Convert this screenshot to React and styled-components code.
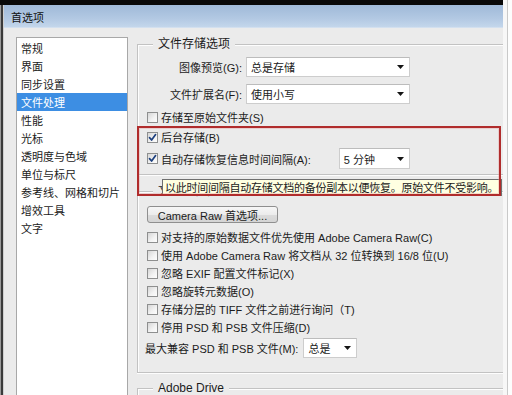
import React from "react";
import styled, { createGlobalStyle } from "styled-components";

const GlobalStyle = createGlobalStyle`
  html, body { margin: 0; padding: 0; background: #fff; }
  body {
    font-family: "Liberation Sans", "Noto Sans CJK SC", sans-serif;
    font-size: 11px;
    color: #1b1b1b;
  }
`;

const Screen = styled.div`
  width: 512px;
  height: 395px;
  display: flex;
  overflow: hidden;
  position: relative;
  background: #fff;
`;

const Frame = styled.div`
  width: 503px;
  display: flex;
  flex-direction: column;
`;

const TopStrip = styled.div`
  height: 5px;
  flex-shrink: 0;
  background: #080808;
`;

const FrameRow = styled.div`
  flex: 1;
  display: flex;
  min-height: 0;
`;

const LeftEdge = styled.div`
  width: 4px;
  background: linear-gradient(
    to right,
    #9a9a9a 0,
    #9a9a9a 1px,
    #3a3a3a 1px,
    #3a3a3a 3px,
    #cfcfcf 3px
  );
`;

const Inner = styled.div`
  flex: 1;
  display: flex;
  flex-direction: column;
  min-width: 0;
  min-height: 0;
`;

const TitleBar = styled.div`
  height: 23px;
  flex-shrink: 0;
  display: flex;
  align-items: center;
  padding-left: 7px;
  background: linear-gradient(to bottom, #9fb9d8 0%, #b3c9e3 60%, #c3d6eb 95%, #dfe8f2 100%);
  font-family: "Noto Sans CJK SC", sans-serif;
  font-size: 11px;
  color: #111;
`;

const Body = styled.div`
  flex: 1;
  display: flex;
  gap: 9px;
  padding: 9px 0 0 12px;
  background: #ebebeb;
  min-height: 0;
  overflow: hidden;
`;

const List = styled.div`
  width: 112px;
  flex-shrink: 0;
  box-sizing: border-box;
  height: 400px;
  background: #fff;
  border: 1px solid #a8a8a8;
  padding-top: 1px;
  display: flex;
  flex-direction: column;
`;

const ListItem = styled.div`
  height: 18px;
  flex-shrink: 0;
  line-height: 18px;
  padding-left: 4px;
  font-family: "Noto Sans CJK SC", sans-serif;
  font-size: 11px;
  background: ${(p) => (p.$selected ? "#3d8ee3" : "transparent")};
  color: ${(p) => (p.$selected ? "#fff" : "#1b1b1b")};
`;

const Panel = styled.div`
  flex: 1;
  display: flex;
  flex-direction: column;
  min-width: 0;
`;

const Group = styled.div`
  flex-shrink: 0;
  margin-top: ${(p) => p.$mt}px;
  border: 1px solid #c2c2c2;
  border-right: none;
  box-shadow: inset 1px 1px 0 #fdfdfd, 0 1px 0 #fdfdfd;
  display: flex;
  flex-direction: column;
  padding-bottom: ${(p) => p.$pb || 0}px;
  min-height: ${(p) => p.$minH || 0}px;
`;

const Legend = styled.div`
  flex-shrink: 0;
  align-self: flex-start;
  margin: -8px 0 0 15px;
  padding: 0 5px;
  height: 14px;
  line-height: 14px;
  font-size: 12px;
  background: #ebebeb;
  white-space: nowrap;
`;

const FieldRow = styled.div`
  flex-shrink: 0;
  margin-top: ${(p) => p.$mt}px;
  display: flex;
  align-items: center;
  height: ${(p) => p.$h || 20}px;
`;

const FieldLabel = styled.div`
  width: 104px;
  text-align: right;
  margin-right: 4px;
  white-space: nowrap;
`;

const SelectBox = styled.div`
  flex-shrink: 0;
  width: ${(p) => p.$w}px;
  height: ${(p) => p.$h || 20}px;
  box-sizing: border-box;
  margin-left: ${(p) => p.$ml || 0}px;
  display: flex;
  align-items: center;
  justify-content: space-between;
  padding: 0 5px 0 4px;
  background: #fff;
  border: 1px solid #cdcdcd;
  border-top-color: #bcbcbc;
  white-space: nowrap;
`;

const CheckRow = styled.div`
  flex-shrink: 0;
  margin-top: ${(p) => p.$mt}px;
  height: ${(p) => p.$h || 16}px;
  display: flex;
  align-items: center;
  padding-left: 9px;
  gap: 3px;
  white-space: nowrap;
`;

const Box = styled.span`
  width: 11px;
  height: 11px;
  box-sizing: border-box;
  flex-shrink: 0;
  border: 1px solid #8e8f8f;
  background: linear-gradient(135deg, #d6d6d6 0%, #f3f3f3 60%, #fdfdfd 100%);
  display: flex;
  align-items: center;
  justify-content: center;
`;

const ButtonRow = styled.div`
  flex-shrink: 0;
  margin-top: ${(p) => p.$mt}px;
  padding-left: 9px;
  display: flex;
`;

const Button = styled.div`
  width: 131px;
  height: 17px;
  box-sizing: border-box;
  border: 1px solid #8f8f8f;
  border-radius: 3px;
  background: linear-gradient(to bottom, #f7f7f7 0%, #ececec 50%, #dcdcdc 51%, #d4d4d4 100%);
  display: flex;
  align-items: center;
  justify-content: center;
  white-space: nowrap;
`;

const PlainRow = styled.div`
  flex-shrink: 0;
  margin-top: ${(p) => p.$mt}px;
  height: 20px;
  display: flex;
  align-items: center;
  padding-left: 7px;
  white-space: nowrap;
`;

const Tooltip = styled.div`
  position: absolute;
  left: 162px;
  top: 179px;
  width: 340px;
  height: 17px;
  box-sizing: border-box;
  background: #ffffe1;
  border: 1px solid #6f6f6f;
  border-bottom: none;
  padding-left: 2px;
  line-height: 14px;
  font-family: "Noto Sans CJK SC", sans-serif;
  font-size: 11px;
  letter-spacing: -0.25px;
  white-space: nowrap;
  overflow: hidden;
`;

const Highlight = styled.div`
  position: absolute;
  left: 137px;
  top: 126px;
  width: 364px;
  height: 70px;
  box-sizing: border-box;
  border: 2px solid #b02c2c;
  box-shadow: inset 0 0 0 1px rgba(230, 150, 150, 0.35);
`;

const RightGutter = styled.div`
  width: 9px;
  background: linear-gradient(
    to right,
    #f7f7f7 0,
    #f7f7f7 4px,
    #c9c9c9 4px,
    #c9c9c9 5px,
    #fdfdfd 5px
  );
`;

const Arrow = () => (
  <svg width="7" height="4" viewBox="0 0 7 4">
    <path d="M0 0 H7 L3.5 4 Z" fill="#151515" />
  </svg>
);

const Select = ({ w, h, ml, children }) => (
  <SelectBox $w={w} $h={h} $ml={ml}>
    <span>{children}</span>
    <Arrow />
  </SelectBox>
);

const Check = ({ checked }) => (
  <Box>
    {checked && (
      <svg width="9" height="9" viewBox="0 0 9 9">
        <path
          d="M1.5 4.6 L3.6 7 L7.6 1.6"
          fill="none"
          stroke="#1c3f7e"
          strokeWidth="1.7"
          strokeLinecap="round"
          strokeLinejoin="round"
        />
      </svg>
    )}
  </Box>
);

const navItems = [
  "常规",
  "界面",
  "同步设置",
  "文件处理",
  "性能",
  "光标",
  "透明度与色域",
  "单位与标尺",
  "参考线、网格和切片",
  "增效工具",
  "文字",
];

const compatOptions = [
  "对支持的原始数据文件优先使用 Adobe Camera Raw(C)",
  "使用 Adobe Camera Raw 将文档从 32 位转换到 16/8 位(U)",
  "忽略 EXIF 配置文件标记(X)",
  "忽略旋转元数据(O)",
  "存储分层的 TIFF 文件之前进行询问（T)",
  "停用 PSD 和 PSB 文件压缩(D)",
];

export default function App() {
  return (
    <>
      <GlobalStyle />
      <Screen>
        <Frame>
          <TopStrip />
          <FrameRow>
            <LeftEdge />
            <Inner>
              <TitleBar>首选项</TitleBar>
              <Body>
                <List>
                  {navItems.map((n) => (
                    <ListItem key={n} $selected={n === "文件处理"}>
                      {n}
                    </ListItem>
                  ))}
                </List>
                <Panel>
                  <Group $mt={7} $pb={5}>
                    <Legend>文件存储选项</Legend>
                    <FieldRow $mt={6}>
                      <FieldLabel>图像预览(G):</FieldLabel>
                      <Select w={164}>总是存储</Select>
                    </FieldRow>
                    <FieldRow $mt={7}>
                      <FieldLabel>文件扩展名(F):</FieldLabel>
                      <Select w={164}>使用小写</Select>
                    </FieldRow>
                    <CheckRow $mt={5}>
                      <Check />
                      <span>存储至原始文件夹(S)</span>
                    </CheckRow>
                    <CheckRow $mt={4}>
                      <Check checked />
                      <span>后台存储(B)</span>
                    </CheckRow>
                    <CheckRow $mt={3} $h={21}>
                      <Check checked />
                      <span>自动存储恢复信息时间间隔(A):</span>
                      <Select w={71} h={21} ml={25}>
                        5 分钟
                      </Select>
                    </CheckRow>
                  </Group>
                  <Group $mt={16} $pb={14}>
                    <Legend>文件兼容性</Legend>
                    <ButtonRow $mt={8}>
                      <Button>Camera Raw 首选项...</Button>
                    </ButtonRow>
                    {compatOptions.map((o, i) => (
                      <CheckRow key={o} $mt={i === 0 ? 5 : 0} $h={18}>
                        <Check />
                        <span>{o}</span>
                      </CheckRow>
                    ))}
                    <PlainRow $mt={2}>
                      <span>最大兼容 PSD 和 PSB 文件(M):</span>
                      <Select w={54} ml={5}>
                        总是
                      </Select>
                    </PlainRow>
                  </Group>
                  <Group $mt={15} $minH={30}>
                    <Legend>Adobe Drive</Legend>
                  </Group>
                </Panel>
              </Body>
            </Inner>
          </FrameRow>
        </Frame>
        <RightGutter />
        <Tooltip>以此时间间隔自动存储文档的备份副本以便恢复。原始文件不受影响。</Tooltip>
        <Highlight />
      </Screen>
    </>
  );
}
